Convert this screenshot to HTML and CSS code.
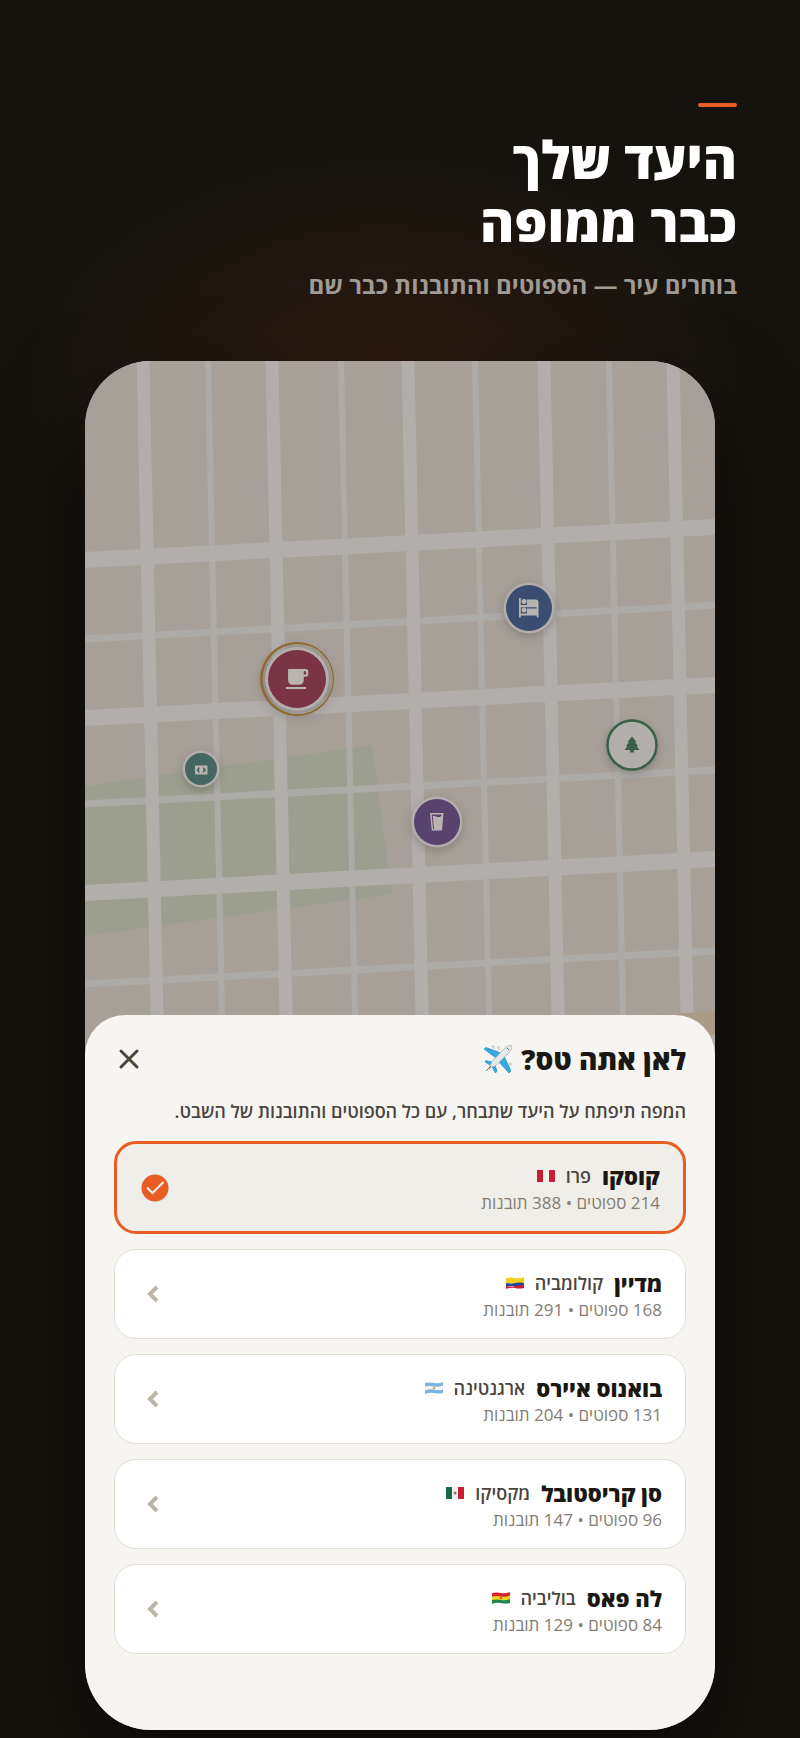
FILE: index.html
```html
<!DOCTYPE html>
<html lang="he" dir="rtl">
<head>
<meta charset="UTF-8">
<meta name="viewport" content="width=device-width, initial-scale=1.0">
<title>היעד שלך כבר ממופה</title>
<link rel="stylesheet" href="styles.css">
</head>
<body>
  <header class="hero">
    <div class="accent"></div>
    <h1>היעד שלך<br>כבר ממופה</h1>
    <p class="tagline">בוחרים עיר — הספוטים והתובנות כבר שם</p>
  </header>

  <main class="device">
    <svg class="map" viewBox="0 0 630 700" preserveAspectRatio="xMidYMin slice" aria-hidden="true">
      <rect width="630" height="700" fill="#a7a099"/>
      <polygon points="0,425 287,384 307,533 0,575" fill="#9c9f90"/>

      <!-- side streets -->
      <g stroke="#adaba8" stroke-width="6">
        <path d="M123 0l15 700M256 0l15 700M390 0l15 700M524 0l15 700"/>
        <path stroke-width="7" d="M0 278l630-34M0 443l630-34M0 623l630-33"/>
      </g>
      <!-- main streets -->
      <g stroke="#b1aeab" stroke-width="13">
        <path d="M58 0l15 700M187 0l15 700M323 0l15 700M459 0l15 700M588 0l15 700"/>
        <path stroke-width="16" d="M0 199l630-33M0 357l630-33M0 532l630-34"/>
      </g>
      <polygon points="540,656 630,650 630,674 540,680" fill="#a99b85"/>
      <polygon points="540,680 630,674 630,700 540,700" fill="#b1aeab"/>

      <!-- cafe -->
      <g class="pin" transform="translate(212 318)">
        <path fill="#8f6a2e" fill-rule="evenodd" d="M-37 0a37 37 0 1 0 74 0a37 37 0 1 0-74 0zM-34.400 0a35.100 35.100 0 1 0 70.200 0a35.100 35.100 0 1 0-70.200 0z"/>
        <circle r="32" fill="#b3adab"/>
        <circle r="29" fill="#7b3346"/>
        <path transform="translate(-13.400 -13.400) scale(1.120)" fill="#b9b4b0" d="M20 3H4v10c0 2.210 1.790 4 4 4h6c2.210 0 4-1.790 4-4v-3h2c1.110 0 2-.9 2-2V5c0-1.110-.89-2-2-2zm0 5h-2V5h2v3zM2 21h18v-2H2v2z"/>
      </g>
      <!-- hostel -->
      <g class="pin" transform="translate(444 247)">
        <circle r="25.500" fill="#b3adab"/>
        <circle r="23" fill="#3a4d70"/>
        <g fill="#b9b4b0">
          <path d="M-10-10h1.800v19.500H-10zM-2-8.500H6.500A3 3 0 0 1 9.500-5.500V9.500H7.800V7.500H-8.500V5.500H-2V.5H7.500V-.8H-8.500V-3H-2z"/>
          <circle cx="-5" cy="-6.500" r="2.500"/>
          <circle cx="-5" cy="2" r="2.500"/>
        </g>
      </g>
      <!-- park -->
      <g class="pin" transform="translate(547 384)">
        <circle r="24.500" fill="#b1aeab" stroke="#3a5f48" stroke-width="2.500"/>
        <path fill="#3a5f48" d="M0-8.500L4.500-3H3L6 1H4.800L7.500 5H2V7.500H-2V5H-7.500L-4.800 1H-6L-3-3H-4.500z"/>
      </g>
      <!-- bar -->
      <g class="pin" transform="translate(352 461)">
        <circle r="25.500" fill="#b3adab"/>
        <circle r="23" fill="#58426e"/>
        <path fill="#b9b4b0" fill-rule="evenodd" d="M-7-9H6.500L5 8.500H-5.200zM-5.300-7.600L-4 7H-3L-4.200-6H-2L0-5H3L4.500-6.500V-7.600z"/>
      </g>
      <!-- atm -->
      <g class="pin" transform="translate(116 408)">
        <circle r="18.500" fill="#b3adab"/>
        <circle r="16" fill="#446660"/>
        <path fill="#b9b4b0" fill-rule="evenodd" d="M-6-3.500H6.500V5.500H-6zM-4.500 1L-2.500 3.500H-1.200L-2 1L-1.200-1.500H-2.500zM5 1L3-1.500H1.700L2.500 1L1.700 3.500H3z"/>
      </g>
    </svg>

    <section class="sheet">
      <div class="sheet-head">
        <h2>לאן אתה טס?
          <svg class="plane" viewBox="0 0 28 28" aria-hidden="true">
            <path fill="#35a8e0" stroke="#2287bd" stroke-width=".6" d="M17 8L2 2.500L0 4L12 13zM20 11L27 26L25 28L15 17zM8 17L2 15.500L1 17L6 20zM11 20L13 26L11.500 28L8 22z"/>
            <path fill="#c9ccd0" d="M7 1l2-1 2 1-1 3zM13 2l2-1 1 2-1 3zM27 17l1 3-2 1-2-2z"/>
            <path fill="#e6e8ea" stroke="#a4a8ad" stroke-width=".7" d="M27.500.5c1 1.500 0 4.500-3 7.500L12 20.500L5 23.500L8 16.500L20 4C23 1 26-.3 27.500.5z"/>
            <path stroke="#666b70" d="M2 26l5-5M23 3l2 2"/>
          </svg>
        </h2>
        <button class="close" aria-label="סגירה">
          <svg viewBox="0 0 24 24"><path d="M4 4l16 16M20 4L4 20"/></svg>
        </button>
      </div>
      <p class="lead">המפה תיפתח על היעד שתבחר, עם כל הספוטים והתובנות של השבט.</p>

      <div class="list">
        <button class="card selected">
          <span class="info">
            <span class="place">
              <b>קוסקו</b>
              <span class="country">פרו</span>
              <svg class="flag" viewBox="0 0 18 12"><rect width="18" height="12" fill="#f2f2f2"/><path fill="#c81f34" d="M0 0h6v12H0zM12 0h6v12h-6z"/></svg>
            </span>
            <span class="meta">214 ספוטים • 388 תובנות</span>
          </span>
          <svg class="icon" viewBox="0 0 32 32"><circle cx="16" cy="16" r="13.500" fill="#e85d24"/><path d="M8 15.500l5.500 5.500L24.500 10" fill="none" stroke="#f6f5f1" stroke-width="2"/></svg>
        </button>

        <button class="card">
          <span class="info">
            <span class="place">
              <b>מדיין</b>
              <span class="country">קולומביה</span>
              <svg class="flag" viewBox="0 0 18 12"><path fill="#f5cf1d" d="M0 1q4.500-1 9 0t9-1v6.500H0z"/><path fill="#2546a0" d="M0 6q4.500 1 9 0t9 0v3H0z"/><path fill="#c81f34" d="M0 9q4.500 1 9 0t9-1v3q-4.500 1-9 0t-9 1z"/></svg>
            </span>
            <span class="meta">168 ספוטים • 291 תובנות</span>
          </span>
          <svg class="icon chevron" viewBox="0 0 32 32"><path d="M20 9l-7 7 7 7"/></svg>
        </button>

        <button class="card">
          <span class="info">
            <span class="place">
              <b>בואנוס איירס</b>
              <span class="country">ארגנטינה</span>
              <svg class="flag" viewBox="0 0 18 12"><path fill="#79b4e2" d="M0 1q4.500-1 9 0t9-1v11q-4.500 1-9 0t-9 1z"/><path fill="#f4f6f8" d="M0 4.500q4.500-1 9 0t9-1v4q-4.500 1-9 0t-9 1z"/><circle cx="9" cy="6" r="1.300" fill="#e8a33d"/></svg>
            </span>
            <span class="meta">131 ספוטים • 204 תובנות</span>
          </span>
          <svg class="icon chevron" viewBox="0 0 32 32"><path d="M20 9l-7 7 7 7"/></svg>
        </button>

        <button class="card">
          <span class="info">
            <span class="place">
              <b>סן קריסטובל</b>
              <span class="country">מקסיקו</span>
              <svg class="flag" viewBox="0 0 18 12"><rect width="18" height="12" fill="#f2f2f2"/><path fill="#17694a" d="M0 0h6v12H0z"/><path fill="#c81f34" d="M12 0h6v12h-6z"/><circle cx="9" cy="6" r="1.500" fill="#94713f"/></svg>
            </span>
            <span class="meta">96 ספוטים • 147 תובנות</span>
          </span>
          <svg class="icon chevron" viewBox="0 0 32 32"><path d="M20 9l-7 7 7 7"/></svg>
        </button>

        <button class="card">
          <span class="info">
            <span class="place">
              <b>לה פאס</b>
              <span class="country">בוליביה</span>
              <svg class="flag" viewBox="0 0 18 12"><path fill="#d3232f" d="M0 1q4.500-1 9 0t9-1v5H0z"/><path fill="#f0d420" d="M0 4.500q4.500-1 9 0t9-1v4.500H0z"/><path fill="#21864a" d="M0 8q4.500-1 9 0t9-1v4q-4.500 1-9 0t-9 1z"/><circle cx="9" cy="6" r="1.300" fill="#a87b35"/></svg>
            </span>
            <span class="meta">84 ספוטים • 129 תובנות</span>
          </span>
          <svg class="icon chevron" viewBox="0 0 32 32"><path d="M20 9l-7 7 7 7"/></svg>
        </button>
      </div>
    </section>
  </main>
</body>
</html>
```
FILE: styles.css
```css
:root {
  --orange: #e85d24;
  --ink: #1b1813;
  --ink-soft: #4a443d;
  --muted: #857d72;
  --sheet: #f6f5f1;
  --line: #e4dfd6;
}

* {
  box-sizing: border-box;
}

body {
  margin: 0;
  padding: 103px 0 8px;
  font-family: "Open Sans", "DejaVu Sans", sans-serif;
  color: var(--ink);
  background: radial-gradient(ellipse 360px 230px at 48% 380px, rgba(232, 93, 36, 0.1), rgba(232, 93, 36, 0)) #16130e;
}

h1, h2, p {
  margin: 0;
}

.hero {
  padding: 0 63px;
  height: 258px;
}

.accent {
  width: 39px;
  height: 4px;
  border-radius: 2px;
  background: var(--orange);
}

h1 {
  margin-top: 20px;
  font-size: 52px;
  line-height: 63px;
  font-weight: 800;
  color: #fff;
}

.tagline {
  margin-top: 14px;
  font-size: 24px;
  line-height: 36px;
  font-weight: 700;
  color: #a09a95;
}

.device {
  margin: 0 85px;
  border-radius: 66px;
  overflow: hidden;
  background: #a7a099;
  box-shadow: 0 40px 90px rgba(0, 0, 0, 0.5);
}

.map {
  display: block;
  width: 100%;
  height: 700px;
}

.pin {
  filter: drop-shadow(0 3px 4px rgba(0, 0, 0, 0.2));
}

.sheet {
  position: relative;
  margin-top: -46px;
  padding: 22px 29px 76px;
  border-radius: 40px 40px 0 0;
  background: var(--sheet);
}

.sheet-head {
  display: flex;
  align-items: center;
  justify-content: space-between;
  height: 44px;
}

h2 {
  display: flex;
  align-items: center;
  gap: 9px;
  font-size: 28px;
  line-height: 40px;
  font-weight: 800;
}

.plane {
  width: 28px;
  height: 28px;
}

.close {
  display: flex;
  padding: 3px;
  border: none;
  background: none;
  cursor: pointer;
}

.close svg {
  width: 24px;
  height: 24px;
  stroke: var(--ink-soft);
  stroke-width: 3;
  stroke-linecap: round;
}

.lead {
  margin-top: 16px;
  font-size: 18px;
  line-height: 28px;
  font-weight: 600;
  color: var(--ink-soft);
}

.list {
  display: flex;
  flex-direction: column;
  gap: 15px;
  margin-top: 16px;
}

.card {
  display: flex;
  align-items: center;
  justify-content: space-between;
  width: 100%;
  min-height: 90px;
  padding: 0 23px 0 22px;
  border: 1px solid var(--line);
  border-radius: 22px;
  background: #fff;
  font-family: inherit;
  color: inherit;
  text-align: right;
  cursor: pointer;
}

.card.selected {
  min-height: 93px;
  border: 3px solid var(--orange);
  background: #efeee9;
}

.info {
  padding-top: 3px;
}

.place {
  display: flex;
  align-items: center;
  gap: 11px;
  font-size: 22px;
  line-height: 28px;
}

.place b {
  font-weight: 800;
}

.country {
  font-size: 18px;
  font-weight: 600;
  color: var(--ink-soft);
}

.flag {
  width: 18px;
  height: 12px;
}

.meta {
  display: block;
  font-size: 17px;
  line-height: 26px;
  color: var(--muted);
}

.icon {
  width: 32px;
  height: 32px;
}

.chevron {
  fill: none;
  stroke: #bdb5a8;
  stroke-width: 4;
}
```
